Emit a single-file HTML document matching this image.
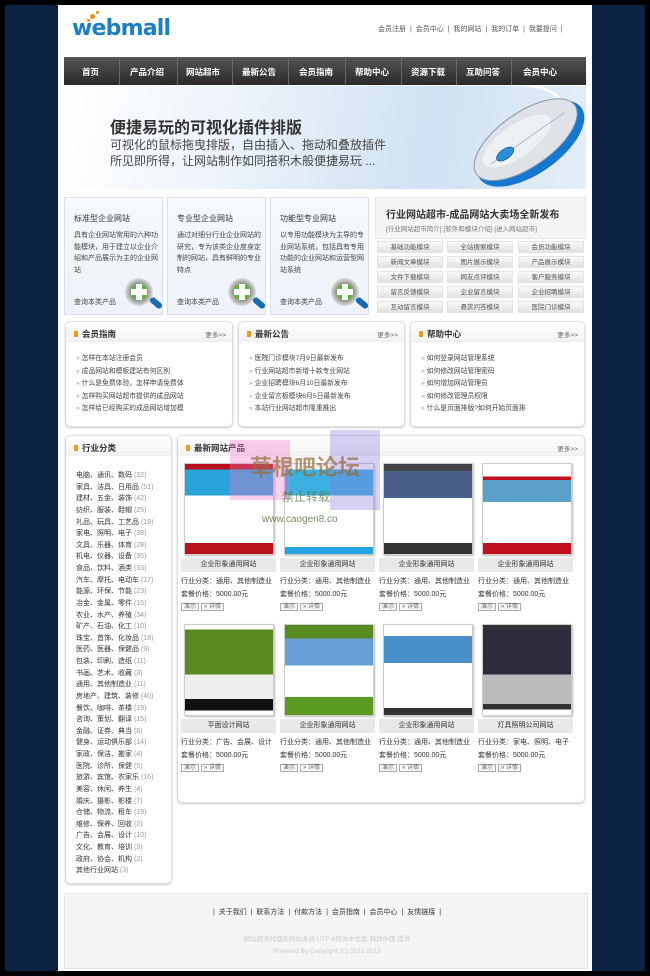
<!DOCTYPE html>
<html><head><meta charset="utf-8">
<style>
*{margin:0;padding:0;box-sizing:border-box}
body{width:650px;height:976px;background:#0c2244;position:relative;overflow:hidden;font-family:"Liberation Sans","Noto Sans CJK SC",sans-serif;color:#333;font-size:8px}
.a{position:absolute}
#lb{left:0;top:0;width:5px;height:976px;background:#000}
#rb{right:0;top:0;width:5px;height:976px;background:#000}
#tb{left:0;top:0;width:650px;height:5px;background:#000}
#bb{left:0;top:971px;width:650px;height:5px;background:#000}
#page{left:58px;top:5px;width:534px;height:966px;background:#fff}
.box{position:absolute;border:1px solid #ddd;border-radius:5px;background:#fff;box-shadow:0 1px 2px #ccc}
.nav{left:64px;top:57px;width:522px;height:28px;background:linear-gradient(#555,#2a2a2a);}
.nav span{position:absolute;top:9px;color:#fff;font-size:8.5px;font-weight:bold}
.nav i{position:absolute;top:0;width:1px;height:28px;background:#666}
.banner{left:64px;top:86px;width:522px;height:103px;background:linear-gradient(100deg,#fff 0%,#eef4fa 30%,#cfe1f3 70%,#e4eef8 100%);overflow:hidden}
.fb{position:absolute;top:197px;width:99px;height:118px;border:1px solid #d8dfe8;background:linear-gradient(#f6f9fd,#eef3f9)}
.fb h4{position:absolute;left:9px;top:15px;font-size:8px;font-weight:normal;color:#333}
.fb p{position:absolute;left:9px;top:32px;width:84px;font-size:7px;line-height:11.5px;color:#444}
.fb em{position:absolute;left:9px;top:99px;font-style:normal;font-size:7px;color:#444}
.mag{position:absolute;left:60px;top:80px;width:28px;height:28px;border-radius:50%;background:radial-gradient(circle,#5db830 40%,#9a9a9a 45%,#ddd 70%);}
.mag:after{content:"";position:absolute;left:24px;top:22px;width:14px;height:6px;background:#1a6bb5;border-radius:3px;transform:rotate(40deg)}
.mag b{position:absolute;left:11px;top:6px;width:6px;height:16px;background:#fff}
.mag u{position:absolute;left:6px;top:11px;width:16px;height:6px;background:#fff}
.mb{position:absolute;width:66px;height:12px;background:linear-gradient(#fafafa,#e2e2e2);border:1px solid #e4e4e4;font-size:6.5px;color:#555;text-align:center;line-height:11px}
.ib h3{position:absolute;left:8px;top:6px;font-size:8.5px;color:#333}
.ib h3:before{content:"";display:inline-block;width:4px;height:6px;background:#f39a1a;margin-right:4px}
.ib .more{position:absolute;right:6px;top:7px;font-size:6.5px;color:#666}
.ib .hd{position:absolute;left:0;top:0;right:0;height:20px;background:linear-gradient(#fff,#f3f3f3);border-bottom:1px solid #eee;border-radius:5px 5px 0 0}
.ib ul{position:absolute;left:10px;top:31px;list-style:none;font-size:6.8px;line-height:12.6px;color:#444}
.ib li:before{content:"» ";color:#999}
.cat{position:absolute;left:10px;top:34px;font-size:7px;line-height:11.62px;color:#333;white-space:nowrap}
.cat s{text-decoration:none;color:#999}
.pr{position:absolute;width:95px}
.pr .im{position:absolute;left:3px;top:0;width:90px;height:92px;border:1px solid #ccc;box-shadow:1px 1px 2px #bbb}
.pr .t{position:absolute;left:0;width:95px;height:14px;background:#e9e9e9;text-align:center;font-size:7px;line-height:14px;color:#333}
.pr .d{position:absolute;left:0;font-size:7px;line-height:13px;color:#333;white-space:nowrap}
.pr .bt{position:absolute;left:0;font-size:6px;color:#666;white-space:nowrap}
.pr .bt span{border:1px solid #aaa;padding:0 2px;margin-right:2px;background:#f8f8f8}
</style></head><body>
<div class="a" id="lb"></div><div class="a" id="rb"></div><div class="a" id="tb"></div><div class="a" id="bb"></div>
<div class="a" id="page"></div>

<!-- logo -->
<div class="a" style="left:72px;top:16px;font-family:'DejaVu Sans',sans-serif;font-weight:bold;font-size:22px;color:#1c7fc1;letter-spacing:-0.8px">webmall</div>
<div class="a" style="left:90px;top:14px;width:5px;height:5px;border-radius:50%;background:#f28a1e"></div>
<div class="a" style="left:96px;top:11px;width:3px;height:3px;border-radius:50%;background:#f28a1e"></div>
<div class="a" style="left:87px;top:19px;width:3px;height:3px;border-radius:50%;background:#f28a1e"></div>
<div class="a" style="left:378px;top:24px;font-size:7px;color:#555;white-space:nowrap;word-spacing:2px">会员注册 | 会员中心 | 我的网站 | 我的订单 | 我要提问 |</div>

<!-- nav -->
<div class="a nav">
<span style="left:18px">首页</span><i style="left:55px"></i>
<span style="left:66px">产品介绍</span><i style="left:113px"></i>
<span style="left:122px">网站超市</span><i style="left:168px"></i>
<span style="left:178px">最新公告</span><i style="left:224px"></i>
<span style="left:235px">会员指南</span><i style="left:281px"></i>
<span style="left:291px">帮助中心</span><i style="left:337px"></i>
<span style="left:347px">资源下载</span><i style="left:392px"></i>
<span style="left:402px">互助问答</span><i style="left:447px"></i>
<span style="left:459px">会员中心</span>
</div>

<!-- banner -->
<div class="a banner">
<div class="a" style="left:46px;top:28px;font-size:16px;font-weight:bold;color:#333;white-space:nowrap">便捷易玩的可视化插件排版</div>
<div class="a" style="left:46px;top:51px;font-size:12px;color:#444;line-height:16px;white-space:nowrap">可视化的鼠标拖曳排版，自由插入、拖动和叠放插件<br>所见即所得，让网站制作如同搭积木般便捷易玩 ...</div>
<svg class="a" style="left:360px;top:0" width="162" height="103" viewBox="0 0 162 103">
<path d="M100 0 C112 -2 130 6 135 12" stroke="#fff" stroke-width="3" fill="none"/>
<g transform="rotate(-35 105 55)">
<ellipse cx="105" cy="58" rx="62" ry="30" fill="#1478d0"/>
<ellipse cx="103" cy="52" rx="60" ry="27" fill="#dfe3e8" stroke="#8a96a4" stroke-width="1"/>
<ellipse cx="95" cy="48" rx="40" ry="16" fill="#eef1f4"/>
<path d="M60 52 L150 52" stroke="#aab" stroke-width="0.8"/>
<ellipse cx="78" cy="52" rx="10" ry="5" fill="#2a8fd8" stroke="#136" stroke-width="0.5"/>
</g>
</svg>
</div>

<!-- feature boxes -->
<div class="fb" style="left:64px"><h4>标准型企业网站</h4><p>具有企业网站常用的六种功能模块，用于建立以企业介绍和产品展示为主的企业网站</p><em>查询本类产品</em><div class="mag"><b></b><u></u></div></div>
<div class="fb" style="left:167px"><h4>专业型企业网站</h4><p>通过对细分行业企业网站的研究，专为该类企业度身定制的网站，具有鲜明的专业特点</p><em>查询本类产品</em><div class="mag"><b></b><u></u></div></div>
<div class="fb" style="left:270px"><h4>功能型专业网站</h4><p>以专用功能模块为主导的专业网站系统，包括具有专用功能的企业网站和运营型网站系统</p><em>查询本类产品</em><div class="mag"><b></b><u></u></div></div>

<div class="a" style="left:375px;top:197px;width:211px;height:42px;background:#f5f5f5;border:1px solid #e8e8e8">
<div class="a" style="left:10px;top:8px;font-size:10px;font-weight:bold;color:#333;white-space:nowrap">行业网站超市-成品网站大卖场全新发布</div>
<div class="a" style="left:10px;top:25px;font-size:6.5px;color:#777;white-space:nowrap">[行业网站超市简介] [软件和模块介绍] [进入网站超市]</div>
</div>
<div class="mb" style="left:377px;top:241px">基础功能模块</div><div class="mb" style="left:447px;top:241px">全站搜索模块</div><div class="mb" style="left:518px;top:241px">会员功能模块</div>
<div class="mb" style="left:377px;top:256px">新闻文章模块</div><div class="mb" style="left:447px;top:256px">图片展示模块</div><div class="mb" style="left:518px;top:256px">产品展示模块</div>
<div class="mb" style="left:377px;top:271px">文件下载模块</div><div class="mb" style="left:447px;top:271px">网友点评模块</div><div class="mb" style="left:518px;top:271px">客户服务模块</div>
<div class="mb" style="left:377px;top:286px">留言反馈模块</div><div class="mb" style="left:447px;top:286px">企业留言模块</div><div class="mb" style="left:518px;top:286px">企业招聘模块</div>
<div class="mb" style="left:377px;top:301px">互动留言模块</div><div class="mb" style="left:447px;top:301px">悬赏问答模块</div><div class="mb" style="left:518px;top:301px">医院门诊模块</div>

<!-- info boxes -->
<div class="box ib" style="left:65px;top:321px;width:168px;height:106px"><div class="hd"></div><h3>会员指南</h3><span class="more">更多&gt;&gt;</span>
<ul><li>怎样在本站注册会员</li><li>成品网站和模板建站有何区别</li><li>什么是免费体验，怎样申请免费体</li><li>怎样购买网站超市提供的成品网站</li><li>怎样给已经购买的成品网站增加模</li></ul></div>
<div class="box ib" style="left:238px;top:321px;width:167px;height:106px"><div class="hd"></div><h3>最新公告</h3><span class="more">更多&gt;&gt;</span>
<ul><li>医院门诊模块7月9日最新发布</li><li>行业网站超市新增十款专业网站</li><li>企业招聘模块6月10日最新发布</li><li>企业留言板模块6月5日最新发布</li><li>本站行业网站超市隆重推出</li></ul></div>
<div class="box ib" style="left:410px;top:321px;width:175px;height:106px"><div class="hd"></div><h3>帮助中心</h3><span class="more">更多&gt;&gt;</span>
<ul><li>如何登录网站管理系统</li><li>如何修改网站管理密码</li><li>如何增加网站管理员</li><li>如何修改管理员权限</li><li>什么是页面排版?如何开始页面排</li></ul></div>

<!-- category -->
<div class="box ib" style="left:65px;top:435px;width:107px;height:449px"><div class="hd"></div><h3>行业分类</h3>
<div class="cat">电脑、通讯、数码 <s>(32)</s><br>家具、洁具、日用品 <s>(51)</s><br>建材、五金、装饰 <s>(42)</s><br>纺织、服装、鞋帽 <s>(25)</s><br>礼品、玩具、工艺品 <s>(19)</s><br>家电、照明、电子 <s>(38)</s><br>文具、乐器、体育 <s>(28)</s><br>机电、仪器、设备 <s>(35)</s><br>食品、饮料、酒类 <s>(33)</s><br>汽车、摩托、电动车 <s>(17)</s><br>能源、环保、节能 <s>(23)</s><br>冶金、金属、零件 <s>(15)</s><br>农业、水产、养殖 <s>(34)</s><br>矿产、石油、化工 <s>(10)</s><br>珠宝、首饰、化妆品 <s>(18)</s><br>医药、医器、保健品 <s>(9)</s><br>包装、印刷、造纸 <s>(11)</s><br>书画、艺术、收藏 <s>(3)</s><br>通用、其他制造业 <s>(11)</s><br>房地产、建筑、装修 <s>(40)</s><br>餐饮、咖啡、茶楼 <s>(19)</s><br>咨询、策划、翻译 <s>(15)</s><br>金融、证券、典当 <s>(8)</s><br>健身、运动俱乐部 <s>(14)</s><br>家政、保洁、搬家 <s>(4)</s><br>医院、诊所、保健 <s>(5)</s><br>旅游、宾馆、农家乐 <s>(16)</s><br>美容、休闲、养生 <s>(4)</s><br>婚庆、摄影、影楼 <s>(7)</s><br>仓储、物流、租车 <s>(19)</s><br>维修、保养、回收 <s>(2)</s><br>广告、会展、设计 <s>(10)</s><br>文化、教育、培训 <s>(3)</s><br>政府、协会、机构 <s>(2)</s><br>其他行业网站 <s>(3)</s></div></div>

<!-- products -->
<div class="box ib" style="left:177px;top:435px;width:408px;height:368px"><div class="hd"></div><h3>最新网站产品</h3><span class="more">更多&gt;&gt;</span></div>

<div class="pr" style="left:181px;top:463px"><div class="im" style="background:linear-gradient(#b8101c 0 6%,#2aa4d8 6% 35%,#fff 35% 88%,#b8101c 88%)"></div></div>
<div class="pr" style="left:281px;top:463px"><div class="im" style="background:linear-gradient(#fff 0 6%,#3ab0e0 6% 35%,#fff 35% 92%,#22a4e0 92%)"></div></div>
<div class="pr" style="left:380px;top:463px"><div class="im" style="background:linear-gradient(#444 0 8%,#4a5e8a 8% 38%,#fff 38% 88%,#333 88%)"></div></div>
<div class="pr" style="left:479px;top:463px"><div class="im" style="background:linear-gradient(#fff 0 14%,#c01020 14% 18%,#5aa0c8 18% 42%,#fff 42% 88%,#c01020 88%)"></div></div>
<div class="pr" style="left:181px;top:624px"><div class="im" style="background:linear-gradient(#fff 0 5%,#5a8a22 5% 55%,#eee 55% 82%,#111 82% 95%,#fff 95%)"></div></div>
<div class="pr" style="left:281px;top:624px"><div class="im" style="background:linear-gradient(#5a8a22 0 15%,#6aa0d8 15% 45%,#fff 45% 80%,#5a9a22 80%)"></div></div>
<div class="pr" style="left:380px;top:624px"><div class="im" style="background:linear-gradient(#fff 0 12%,#4a90c8 12% 42%,#fff 42% 92%,#333 92%)"></div></div>
<div class="pr" style="left:479px;top:624px"><div class="im" style="background:linear-gradient(#333 0 5%,#2c2c3c 5% 55%,#bbb 55% 88%,#333 88% 94%,#fff 94%)"></div></div>

<div class="pr" style="left:181px;top:558px"><div class="t" style="top:0">企业形象通用网站</div><div class="d" style="top:17px">行业分类：通用、其他制造业<br>套餐价格：5000.00元</div><div class="bt" style="top:43px"><span>演示</span><span>» 详情</span></div></div>
<div class="pr" style="left:280px;top:558px"><div class="t" style="top:0">企业形象通用网站</div><div class="d" style="top:17px">行业分类：通用、其他制造业<br>套餐价格：5000.00元</div><div class="bt" style="top:43px"><span>演示</span><span>» 详情</span></div></div>
<div class="pr" style="left:379px;top:558px"><div class="t" style="top:0">企业形象通用网站</div><div class="d" style="top:17px">行业分类：通用、其他制造业<br>套餐价格：5000.00元</div><div class="bt" style="top:43px"><span>演示</span><span>» 详情</span></div></div>
<div class="pr" style="left:478px;top:558px"><div class="t" style="top:0">企业形象通用网站</div><div class="d" style="top:17px">行业分类：通用、其他制造业<br>套餐价格：5000.00元</div><div class="bt" style="top:43px"><span>演示</span><span>» 详情</span></div></div>
<div class="pr" style="left:181px;top:719px"><div class="t" style="top:0">平面设计网站</div><div class="d" style="top:17px">行业分类：广告、会展、设计<br>套餐价格：5000.00元</div><div class="bt" style="top:43px"><span>演示</span><span>» 详情</span></div></div>
<div class="pr" style="left:280px;top:719px"><div class="t" style="top:0">企业形象通用网站</div><div class="d" style="top:17px">行业分类：通用、其他制造业<br>套餐价格：5000.00元</div><div class="bt" style="top:43px"><span>演示</span><span>» 详情</span></div></div>
<div class="pr" style="left:379px;top:719px"><div class="t" style="top:0">企业形象通用网站</div><div class="d" style="top:17px">行业分类：通用、其他制造业<br>套餐价格：5000.00元</div><div class="bt" style="top:43px"><span>演示</span><span>» 详情</span></div></div>
<div class="pr" style="left:478px;top:719px"><div class="t" style="top:0">灯具照明公司网站</div><div class="d" style="top:17px">行业分类：家电、照明、电子<br>套餐价格：5000.00元</div><div class="bt" style="top:43px"><span>演示</span><span>» 详情</span></div></div>

<!-- watermark -->
<div class="a" style="left:230px;top:440px;width:60px;height:60px;background:rgba(240,120,200,.35)"></div>
<div class="a" style="left:330px;top:430px;width:50px;height:80px;background:rgba(140,120,220,.35)"></div>
<div class="a" style="left:250px;top:450px;font-size:22px;color:rgba(150,110,60,.7);font-weight:bold;white-space:nowrap">草根吧论坛</div>
<div class="a" style="left:282px;top:488px;font-size:12px;color:rgba(80,120,60,.7);white-space:nowrap">禁止转载</div>
<div class="a" style="left:262px;top:514px;font-size:10px;color:rgba(80,110,60,.8);white-space:nowrap">www.caogen8.co</div>

<!-- footer -->
<div class="a" style="left:64px;top:893px;width:524px;height:76px;background:#f5f5f5;border:1px solid #e5e5e5">
<div class="a" style="left:0;top:13px;width:524px;text-align:center;font-size:7px;color:#333;word-spacing:2px">| 关于我们 | 联系方法 | 付款方法 | 会员指南 | 会员中心 | 友情链接 |</div>
<div class="a" style="left:0;top:40px;width:524px;text-align:center;font-size:6.5px;color:#ccc;line-height:12px">网站超市代理商网站系统 UTF-8简体中文版 韩尚中国 提供<br>Powered By Copyright (C) 2011-2015</div>
</div>
</body></html>
